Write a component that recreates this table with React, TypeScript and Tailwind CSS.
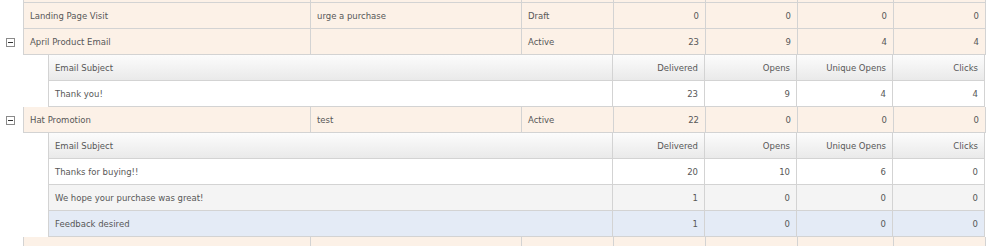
import { ReactNode } from "react";

const cols = ["w-[92px]", "w-[92px]", "w-[96px]", "w-[92px]"];

type Campaign = {
  name: string;
  subject: string;
  status: string;
  stats: number[];
  expanded?: boolean;
  emails?: { subject: string; stats: number[]; tone?: "alt" | "selected" }[];
};

const campaigns: Campaign[] = [
  { name: "Landing Page Visit", subject: "urge a purchase", status: "Draft", stats: [0, 0, 0, 0] },
  {
    name: "April Product Email",
    subject: "",
    status: "Active",
    stats: [23, 9, 4, 4],
    expanded: true,
    emails: [{ subject: "Thank you!", stats: [23, 9, 4, 4] }],
  },
  {
    name: "Hat Promotion",
    subject: "test",
    status: "Active",
    stats: [22, 0, 0, 0],
    expanded: true,
    emails: [
      { subject: "Thanks for buying!!", stats: [20, 10, 6, 0] },
      { subject: "We hope your purchase was great!", stats: [1, 0, 0, 0], tone: "alt" },
      { subject: "Feedback desired", stats: [1, 0, 0, 0], tone: "selected" },
    ],
  },
];

function Cell({ className = "", children }: { className?: string; children?: ReactNode }) {
  return (
    <div className={`h-full flex items-center pt-[2px] px-[6px] border-r border-b border-[#d3d3d3] overflow-hidden whitespace-nowrap ${className}`}>
      {children}
    </div>
  );
}

// collapse toggle in the left gutter
function Toggle() {
  return (
    <div className="w-[9px] h-[9px] border border-[#8a8a8a] bg-white flex items-center justify-center">
      <div className="w-[5px] h-px bg-[#333]" />
    </div>
  );
}

function MainRow({ c, stub = false }: { c?: Campaign; stub?: boolean }) {
  return (
    <div className={`flex ${stub ? "h-[3px]" : "h-[26px]"}`}>
      <div className="w-[23px] shrink-0 flex items-center justify-center pr-[3px]">
        {c?.expanded && <Toggle />}
      </div>
      <div className="flex bg-[#fcf1e7]">
        <Cell className="w-[288px] border-l">{c?.name}</Cell>
        <Cell className="w-[211px]">{c?.subject}</Cell>
        <Cell className="w-[92px]">{c?.status}</Cell>
        {cols.map((w, i) => (
          <Cell key={i} className={`${w} justify-end`}>
            {c?.stats[i]}
          </Cell>
        ))}
      </div>
    </div>
  );
}

function SubHeader() {
  const labels = ["Delivered", "Opens", "Unique Opens", "Clicks"];
  return (
    <div className="flex h-[26px]">
      <div className="w-[48px] shrink-0" />
      <div className="flex bg-gradient-to-b from-[#fcfcfc] to-[#e9e9e9]">
        <Cell className="w-[565px] border-l">Email Subject</Cell>
        {labels.map((l, i) => (
          <Cell key={l} className={`${cols[i]} justify-end`}>
            {l}
          </Cell>
        ))}
      </div>
    </div>
  );
}

function SubRow({ subject, stats, tone }: { subject: string; stats: number[]; tone?: "alt" | "selected" }) {
  const bg = tone === "alt" ? "bg-[#f4f4f4]" : tone === "selected" ? "bg-[#e4ebf6]" : "bg-white";
  return (
    <div className="flex h-[26px]">
      <div className="w-[48px] shrink-0" />
      <div className={`flex ${bg}`}>
        <Cell className="w-[565px] border-l">{subject}</Cell>
        {stats.map((s, i) => (
          <Cell key={i} className={`${cols[i]} justify-end`}>
            {s}
          </Cell>
        ))}
      </div>
    </div>
  );
}

export default function App() {
  return (
    <div
      className="w-[992px] h-[246px] overflow-hidden bg-white text-[8.5px] text-[#575757]"
      style={{ fontFamily: '"DejaVu Sans", Verdana, sans-serif' }}
    >
      <MainRow stub />
      {campaigns.map((c) => (
        <div key={c.name}>
          <MainRow c={c} />
          {c.expanded && (
            <>
              <SubHeader />
              {c.emails?.map((e) => (
                <SubRow key={e.subject} {...e} />
              ))}
            </>
          )}
        </div>
      ))}
      <MainRow />
    </div>
  );
}
